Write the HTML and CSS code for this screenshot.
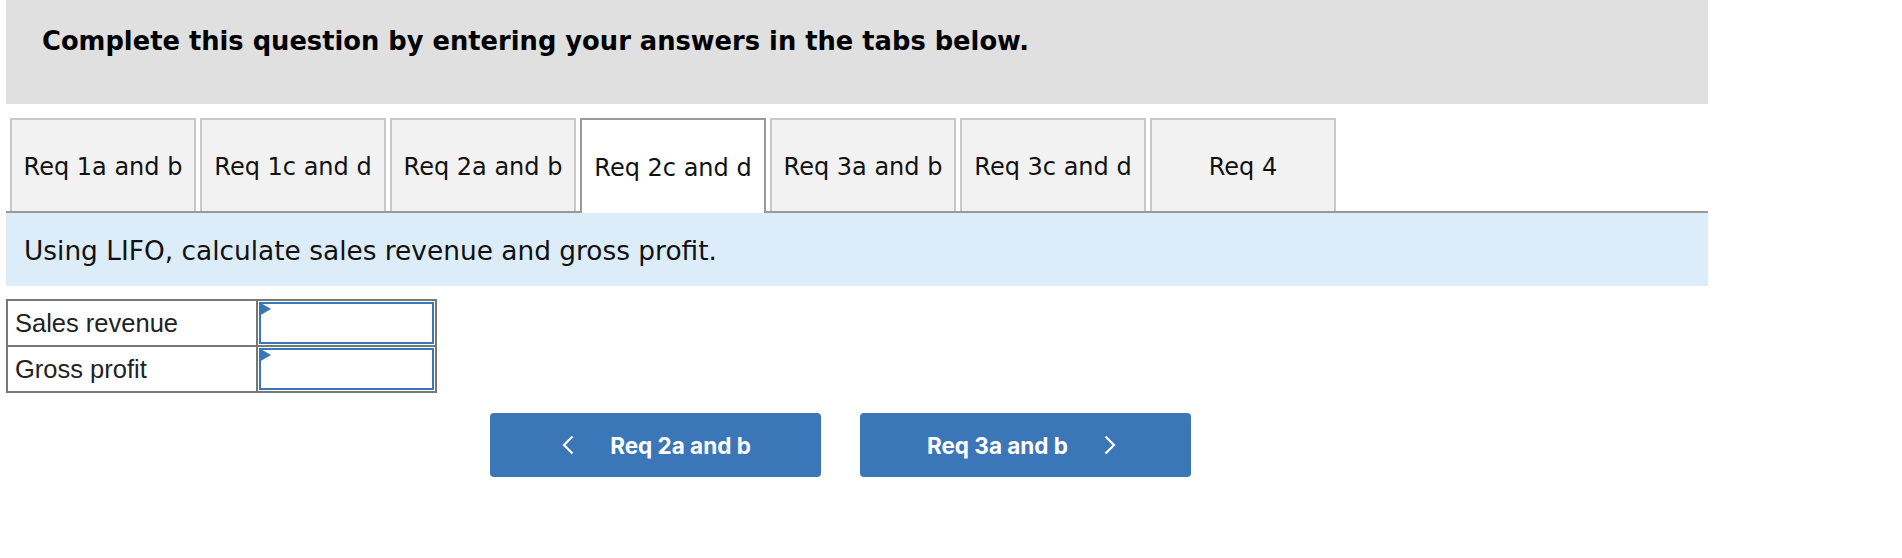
FILE: index.html
```html
<!DOCTYPE html>
<html lang="en">
<head>
  <meta charset="UTF-8" />
  <title>Complete this question</title>
  <link rel="stylesheet" href="styles.css">
</head>
<body>
  <div class="container">
    <div class="header">Complete this question by entering your answers in the tabs below.</div>

    <div class="tabs">
      <div class="tab">Req 1a and b</div>
      <div class="tab">Req 1c and d</div>
      <div class="tab">Req 2a and b</div>
      <div class="tab active">Req 2c and d</div>
      <div class="tab">Req 3a and b</div>
      <div class="tab">Req 3c and d</div>
      <div class="tab">Req 4</div>
    </div>

    <div class="instruction">Using LIFO, calculate sales revenue and gross profit.</div>

    <table class="answers">
      <tr>
        <td class="label">Sales revenue</td>
        <td class="cell"><div class="input"></div></td>
      </tr>
      <tr>
        <td class="label">Gross profit</td>
        <td class="cell"><div class="input"></div></td>
      </tr>
    </table>

    <div class="nav">
      <button class="btn prev">
        <svg class="chev" viewBox="0 0 12 20" width="12" height="20"><path d="M10.5 1.5 L2 10 L10.5 18.5" /></svg>
        <span>Req 2a and b</span>
      </button>
      <button class="btn next">
        <span>Req 3a and b</span>
        <svg class="chev" viewBox="0 0 12 20" width="12" height="20"><path d="M1.5 1.5 L10 10 L1.5 18.5" /></svg>
      </button>
    </div>
  </div>
</body>
</html>
```

FILE: styles.css
```css
body {
  margin: 0;
  background: #fff;
  color: #000;
  font-family: 'DejaVu Sans', Verdana, sans-serif;
}

.container {
  width: 1702px;
  margin-left: 6px;
}

.header {
  height: 104px;
  box-sizing: border-box;
  background: #e0e0e0;
  padding: 26px 0 0 36px;
  font-size: 25.75px;
  font-weight: bold;
}

.tabs {
  display: flex;
  gap: 4px;
  margin-top: 14px;
  padding-left: 4px;
  border-bottom: 2px solid #999;
  height: 93px;
}

.tab {
  width: 186px;
  box-sizing: border-box;
  height: 93px;
  padding-top: 3px;
  background: #f2f2f2;
  border: 2px solid #c8c8c8;
  border-bottom: none;
  display: flex;
  align-items: center;
  justify-content: center;
  font-size: 24px;
  color: #111;
}

.tab.active {
  background: #fff;
  border-color: #999;
  height: 95px;
  position: relative;
  z-index: 1;
}

.instruction {
  background: #dcecf8;
  height: 73px;
  box-sizing: border-box;
  padding: 1px 0 0 18px;
  display: flex;
  align-items: center;
  font-size: 26.4px;
  color: #111;
}

.answers {
  border-collapse: collapse;
  margin-top: 13px;
  font-family: 'Liberation Sans', Arial, sans-serif;
  font-size: 25.5px;
  color: #222;
}

.answers td {
  border: 2px solid #777;
  height: 42px;
  padding: 0;
}

.label {
  width: 241px;
  padding-left: 7px !important;
}

.cell {
  width: 175px;
  padding: 1px !important;
}

.input {
  position: relative;
  height: 38px;
  border: 2px solid #3b76b8;
  background: #fff;
}

.input::before {
  content: "";
  position: absolute;
  left: -2px;
  top: -2px;
  border-left: 12px solid #3b76b8;
  border-top: 7px solid transparent;
  border-bottom: 7px solid transparent;
}

.nav {
  display: flex;
  gap: 39px;
  margin-top: 20px;
  margin-left: 484px;
}

.btn {
  width: 331px;
  height: 64px;
  background: #3b76b8;
  border: none;
  border-radius: 4px;
  color: #fff;
  font-family: Inter, Roboto, 'Liberation Sans', sans-serif;
  font-weight: bold;
  font-size: 22.5px;
  display: flex;
  align-items: center;
  justify-content: center;
  gap: 36px;
  padding: 0;
}

.btn.prev {
  padding-left: 2px;
}

.btn.next {
  padding-right: 8px;
}

.chev path {
  fill: none;
  stroke: #fff;
  stroke-width: 2.2;
}
```
